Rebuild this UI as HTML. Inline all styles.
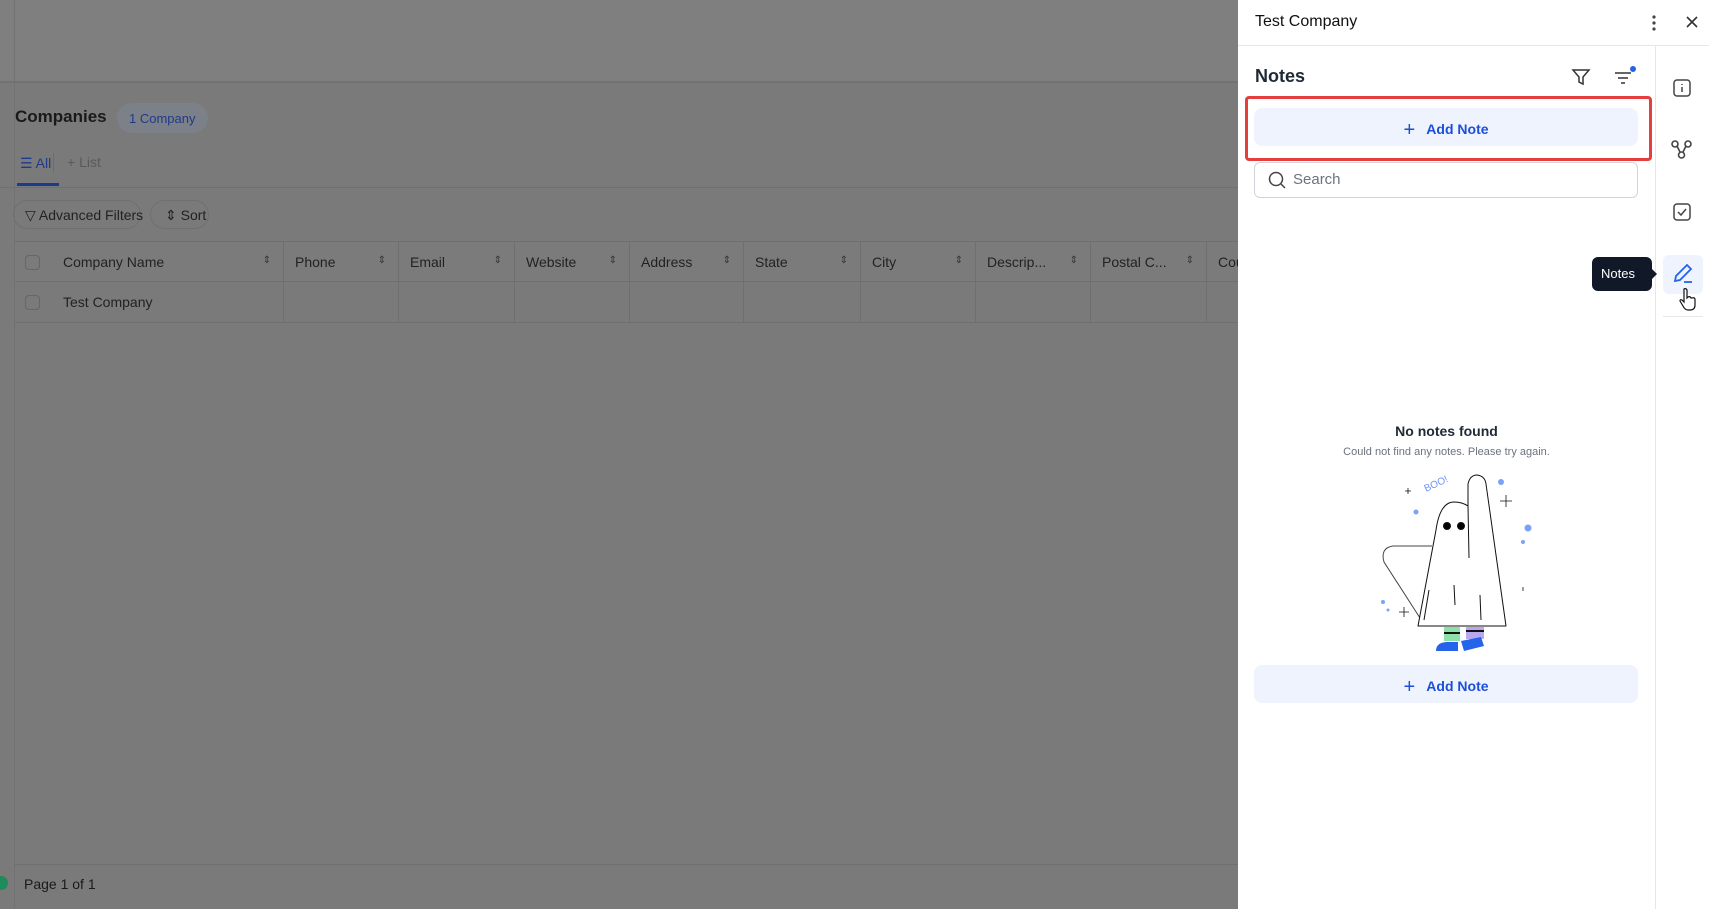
<!DOCTYPE html>
<html><head><meta charset="utf-8"><style>
*{box-sizing:border-box;margin:0;padding:0}
body{width:1709px;height:909px;overflow:hidden;font-family:"Liberation Sans",sans-serif;background:#7a7a7a;position:relative;color:#111;white-space:nowrap}
.abs{position:absolute}
.top{left:0;top:0;width:1238px;height:83px;background:#7f7f7f;border-bottom:2px solid #727272}
.hdr{top:241px;left:15px;width:1223px;height:41px;border-top:1px solid #6f6f6f;border-bottom:1px solid #6f6f6f;background:#7b7b7b}
.row{top:282px;left:15px;width:1223px;height:41px;border-bottom:1px solid #6f6f6f}
.col{position:absolute;top:0;height:100%;border-left:1px solid #6f6f6f;font-size:14px;color:#222;padding:12px 0 0 11px}
.arr{position:absolute;right:12px;top:13px;font-size:10px;color:#333}
.cb{position:absolute;width:15px;height:15px;border:1px solid #666;border-radius:4px}
.pill{border:1px solid #707070;border-radius:16px;height:29px;font-size:14px;color:#222;padding:6px 12px}
.panel{left:1238px;top:0;width:471px;height:909px;background:#fff}
.btn{background:#eef3fd;border-radius:8px;color:#1d4ed8;font-size:14px;font-weight:bold;text-align:center}
</style></head><body>
<div class="abs top"></div>
<div class="abs" style="left:15px;top:107px;font-size:17px;font-weight:bold;color:#1a1a1a">Companies</div>
<div class="abs" style="left:117px;top:103px;height:30px;width:91px;border-radius:15px;background:#7c8088;color:#1e3a8a;font-size:13px;padding:8px 0 0 12px">1 Company</div>
<div class="abs" style="left:20px;top:155px;font-size:14px;color:#1e3a8a">☰ All</div>
<div class="abs" style="left:53px;top:153px;width:1px;height:20px;background:#6c6c6c"></div>
<div class="abs" style="left:67px;top:154px;font-size:14px;color:#5a5a5a">+ List</div>
<div class="abs" style="left:17px;top:183px;width:42px;height:3px;background:#1e3a8a"></div>
<div class="abs" style="left:0;top:187px;width:1238px;height:1px;background:#707070"></div>
<div class="abs pill" style="left:13px;top:200px;width:128px;padding-left:11px">▽ Advanced Filters</div>
<div class="abs pill" style="left:150px;top:200px;width:59px;padding-left:14px">⇕ Sort</div>
<div class="abs hdr">
<div class="cb" style="left:10px;top:13px"></div>
<div class="col" style="left:37px;border:none;width:231px">Company Name<span class="arr">⇕</span></div>
<div class="col" style="left:268px;width:115px">Phone<span class="arr">⇕</span></div>
<div class="col" style="left:383px;width:116px">Email<span class="arr">⇕</span></div>
<div class="col" style="left:499px;width:115px">Website<span class="arr">⇕</span></div>
<div class="col" style="left:614px;width:114px">Address<span class="arr">⇕</span></div>
<div class="col" style="left:728px;width:117px">State<span class="arr">⇕</span></div>
<div class="col" style="left:845px;width:115px">City<span class="arr">⇕</span></div>
<div class="col" style="left:960px;width:115px">Descrip...<span class="arr">⇕</span></div>
<div class="col" style="left:1075px;width:116px">Postal C...<span class="arr">⇕</span></div>
<div class="col" style="left:1191px;width:40px">Cou</div>
</div>
<div class="abs row">
<div class="cb" style="left:10px;top:13px"></div>
<div class="col" style="left:37px;border:none;width:210px">Test Company</div>
<div class="col" style="left:268px"></div><div class="col" style="left:383px"></div><div class="col" style="left:499px"></div><div class="col" style="left:614px"></div><div class="col" style="left:728px"></div><div class="col" style="left:845px"></div><div class="col" style="left:960px"></div><div class="col" style="left:1075px"></div><div class="col" style="left:1191px"></div>
</div>
<div class="abs" style="left:14px;top:0;width:1px;height:909px;background:#727272"></div>
<div class="abs" style="left:14px;top:864px;width:1224px;height:1px;background:#707070"></div>
<div class="abs" style="left:24px;top:876px;font-size:14px;color:#1a1a1a">Page 1 of 1</div>
<div class="abs" style="left:-6px;top:876px;width:14px;height:14px;border-radius:50%;background:#1f8a5a"></div>

<div class="abs panel">
<div class="abs" style="left:0;top:0;width:471px;height:46px;border-bottom:1px solid #e5e7eb"></div>
<div class="abs" style="left:17px;top:13px;font-size:16px;color:#111">Test Company</div>
<svg class="abs" style="left:413px;top:14px" width="6" height="18"><circle cx="3" cy="3" r="1.6" fill="#444"/><circle cx="3" cy="9" r="1.6" fill="#444"/><circle cx="3" cy="15" r="1.6" fill="#444"/></svg>
<svg class="abs" style="left:448px;top:16px" width="12" height="12"><path d="M1 1L11 11M11 1L1 11" stroke="#333" stroke-width="1.6"/></svg>
<div class="abs" style="left:417px;top:46px;width:1px;height:863px;background:#e5e7eb"></div>
<div class="abs" style="left:17px;top:66px;font-size:18px;font-weight:bold;color:#1f2937">Notes</div>
<svg class="abs" style="left:333px;top:67px" width="20" height="20" fill="none" stroke="#333" stroke-width="1.5"><path d="M2 3h16l-6 7v7l-4-2v-5z"/></svg>
<svg class="abs" style="left:375px;top:64px" width="24" height="22" fill="none" stroke="#333" stroke-width="1.5"><path d="M2 9h16M5 14h10M8 19h4"/><circle cx="20" cy="5" r="3" fill="#2563eb" stroke="none"/></svg>
<div class="abs" style="left:7px;top:96px;width:407px;height:65px;border:3px solid #e53e3e;border-radius:4px"></div>
<div class="abs btn" style="left:16px;top:108px;width:384px;height:38px;padding-top:11px"><span style="font-size:20px;font-weight:normal;vertical-align:-2px">+</span>&nbsp;&nbsp; Add Note</div>
<div class="abs" style="left:16px;top:162px;width:384px;height:36px;border:1px solid #d1d5db;border-radius:6px"></div>
<svg class="abs" style="left:30px;top:171px" width="18" height="18" fill="none" stroke="#444" stroke-width="1.5"><circle cx="8" cy="8" r="6.5"/><path d="M13 13l4 4"/></svg>
<div class="abs" style="left:55px;top:171px;font-size:15px;color:#6b7280">Search</div>

<svg class="abs" style="left:435px;top:79px" width="18" height="18" fill="none" stroke="#444" stroke-width="1.5"><rect x="1" y="1" width="16" height="16" rx="3"/><path d="M9 8v5M9 5v1"/></svg>
<svg class="abs" style="left:433px;top:140px" width="22" height="20" fill="none" stroke="#444" stroke-width="1.6"><circle cx="4" cy="4" r="3"/><circle cx="17" cy="4" r="3"/><circle cx="10.5" cy="15" r="3"/><path d="M6 6l3 6M15 6l-3 6"/></svg>
<svg class="abs" style="left:435px;top:203px" width="18" height="18" fill="none" stroke="#444" stroke-width="1.5"><rect x="1" y="1" width="16" height="16" rx="3"/><path d="M5 9l3 3 5-6"/></svg>
<div class="abs" style="left:425px;top:255px;width:40px;height:39px;background:#eef3fd;border-radius:6px"></div>
<svg class="abs" style="left:434px;top:262px" width="22" height="22" fill="none" stroke="#2563eb" stroke-width="1.8"><path d="M3 19l1-5L15 3l4 4L8 18z"/><path d="M12 20h8"/></svg>
<svg class="abs" style="left:441px;top:287px" width="18" height="24" fill="#fff" stroke="#111" stroke-width="1.2"><path d="M5 2q2-1 3 1v8l1-1q2-1 3 1l1 0q2-1 3 1v6q0 5-5 5h-2q-3 0-5-4l-3-5q0-2 2-1l2 2z"/></svg>
<div class="abs" style="left:425px;top:316px;width:40px;height:1px;background:#e5e7eb"></div>
<div class="abs" style="left:354px;top:257px;width:60px;height:34px;background:#111827;border-radius:6px;color:#fff;font-size:13px;padding:9px 0 0 9px">Notes</div>
<div class="abs" style="left:413px;top:268px;width:0;height:0;border-top:6px solid transparent;border-bottom:6px solid transparent;border-left:6px solid #111827"></div>

<div class="abs" style="left:0;width:417px;top:423px;text-align:center;font-size:14px;font-weight:bold;color:#1f2937">No notes found</div>
<div class="abs" style="left:0;width:417px;top:446px;text-align:center;font-size:11px;color:#6b7280">Could not find any notes. Please try again.</div>
<svg class="abs" style="left:110px;top:470px;overflow:visible" width="200" height="185" fill="none" stroke="#111" stroke-width="1">
<path d="M45 76L84 76" stroke="#444"/>
<path d="M45 76Q32 78 36 92L72 148" stroke="#444" fill="#fff"/>
<path d="M70 156L88 60Q92 32 106 32Q114 32 120 36L120 14Q122 5 129 5Q137 6 138 14L158 156Z" fill="#fff" stroke-linejoin="round"/>
<path d="M76 150L81 120M120 36L121 88M132 125L133 150M106 115L107 135"/>
<circle cx="99" cy="56" r="3.5" fill="#000"/><circle cx="113" cy="56" r="3.5" fill="#000"/>
<rect x="96" y="157" width="16" height="14" fill="#8de0a8" stroke="none"/><rect x="96" y="162" width="16" height="2" fill="#111" stroke="none"/>
<rect x="118" y="157" width="18" height="12" fill="#b9a8f0" stroke="none"/><rect x="118" y="160" width="18" height="2" fill="#111" stroke="none"/>
<path d="M88 181q0-9 12-9h10v9z M116 181l-3-10 20-4 3 9z" fill="#2563eb" stroke="none"/>
<text x="78" y="22" font-size="10" fill="#6b93f5" stroke="none" transform="rotate(-25 78 22)" font-family="Liberation Sans">BOO!</text>
<circle cx="153" cy="12" r="3" fill="#7ca2f8" stroke="none"/><circle cx="68" cy="42" r="2.5" fill="#7ca2f8" stroke="none"/>
<circle cx="180" cy="58" r="3.5" fill="#7ca2f8" stroke="none"/><circle cx="175" cy="72" r="2" fill="#7ca2f8" stroke="none"/>
<circle cx="35" cy="132" r="2" fill="#7ca2f8" stroke="none"/><circle cx="40" cy="140" r="1.5" fill="#7ca2f8" stroke="none"/>
<path d="M158 25v12M152 31h12M56 137v10M51 142h10M175 117v4M60 18v6M57 21h6" stroke-width=".8"/>
</svg>
<div class="abs btn" style="left:16px;top:665px;width:384px;height:38px;padding-top:11px"><span style="font-size:20px;font-weight:normal;vertical-align:-2px">+</span>&nbsp;&nbsp; Add Note</div>
</div>
</body></html>
